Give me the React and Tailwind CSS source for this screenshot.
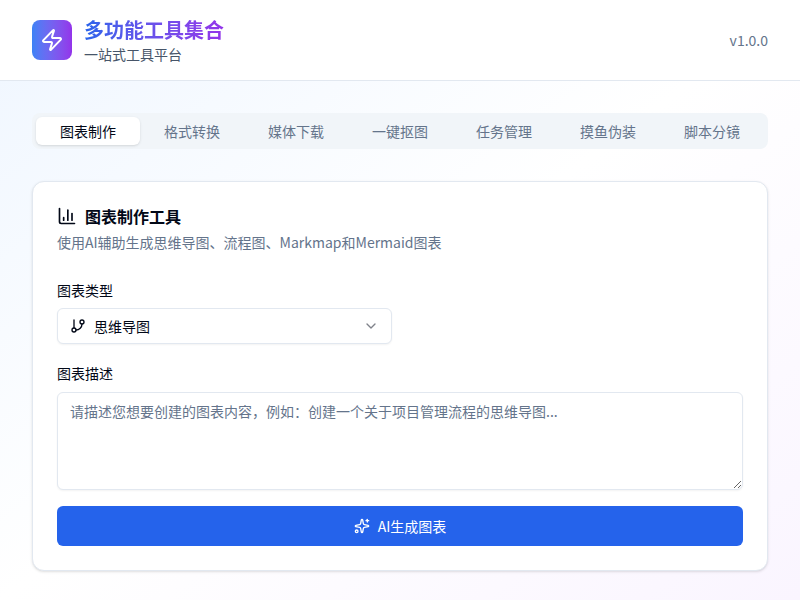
import { Zap, ChartColumn, GitBranch, ChevronDown, Sparkles } from "lucide-react";

const tabs = ["图表制作", "格式转换", "媒体下载", "一键抠图", "任务管理", "摸鱼伪装", "脚本分镜"];

export default function App() {
  return (
    <div className="min-h-screen bg-gradient-to-br from-[#eff6ff] via-white to-[#faf5ff] font-['Noto_Sans_CJK_SC',sans-serif] text-[#020817] antialiased">
      {/* Header */}
      <header className="h-[81px] bg-white border-b border-[#e2e8f0] px-8 flex items-center justify-between">
        <div className="flex items-center gap-3">
          <div className="w-10 h-10 rounded-lg bg-gradient-to-r from-[#3b82f6] to-[#9333ea] flex items-center justify-center">
            <Zap size={24} className="text-white" />
          </div>
          <div>
            <h1 className="text-xl leading-7 font-bold bg-gradient-to-r from-[#2563eb] to-[#9333ea] bg-clip-text text-transparent">
              多功能工具集合
            </h1>
            <p className="text-sm leading-5 text-[#475569]">一站式工具平台</p>
          </div>
        </div>
        <span className="text-sm text-[#64748b]">v1.0.0</span>
      </header>

      {/* Main */}
      <main className="px-8 pt-8">
        <div className="h-9 p-1 rounded-lg bg-[#f1f5f9] grid grid-cols-7">
          {tabs.map((tab, i) => (
            <button
              key={tab}
              className={`rounded-md text-sm flex items-center justify-center ${
                i === 0 ? "bg-white text-[#020817] shadow-sm" : "text-[#64748b]"
              }`}
            >
              {tab}
            </button>
          ))}
        </div>

        <section className="mt-8 h-[390px] bg-white rounded-xl border border-[#e2e8f0] shadow-sm p-6">
          <div className="flex items-center gap-2 h-6 -mt-0.5">
            <ChartColumn size={20} />
            <h2 className="text-base font-semibold">图表制作工具</h2>
          </div>
          <p className="mt-1 text-sm leading-5 text-[#64748b]">
            使用AI辅助生成思维导图、流程图、Markmap和Mermaid图表
          </p>

          <label className="block mt-7 text-sm leading-5">图表类型</label>
          <div className="mt-2 w-[335px] h-9 px-3 rounded-md border border-[#e2e8f0] bg-white shadow-xs flex items-center justify-between">
            <div className="flex items-center gap-2 text-sm">
              <GitBranch size={16} />
              <span>思维导图</span>
            </div>
            <ChevronDown size={16} className="opacity-50" />
          </div>

          <label className="block mt-[19px] text-sm leading-5">图表描述</label>
          <textarea
            className="mt-[9px] block w-full h-[98px] px-3 py-2 text-sm rounded-md border border-[#e2e8f0] bg-white shadow-xs placeholder:text-[#64748b]"
            placeholder="请描述您想要创建的图表内容，例如：创建一个关于项目管理流程的思维导图..."
          />

          <button className="mt-4 w-full h-10 rounded-md bg-[#2563eb] text-white text-sm flex items-center justify-center gap-2">
            <Sparkles size={16} />
            AI生成图表
          </button>
        </section>
      </main>
    </div>
  );
}
